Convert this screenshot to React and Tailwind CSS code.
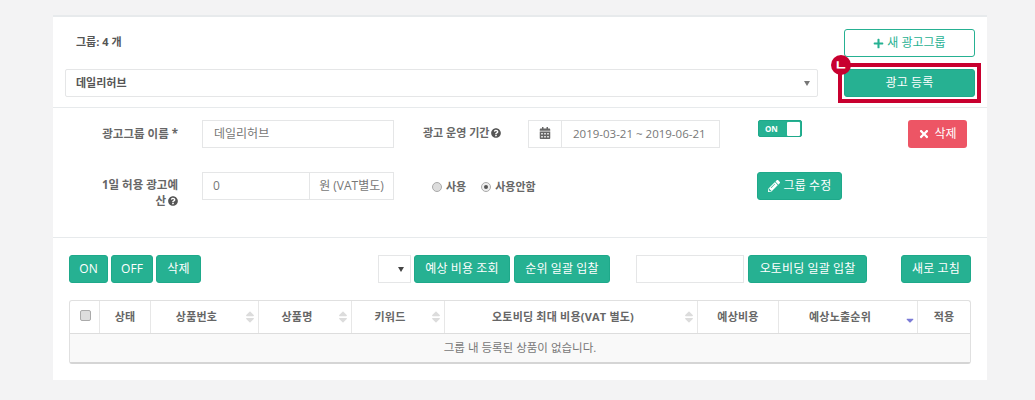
import React from "react";
import { FaPlus, FaTimes, FaPencilAlt, FaCalendarAlt, FaQuestionCircle, FaSort, FaSortDown } from "react-icons/fa";

const GreenBtn = ({ className = "", children }) => (
  <button className={`h-7 flex items-center justify-center gap-1 rounded-[3px] bg-[#26b192] border border-[#1ea98a] text-white text-[12px] tracking-[0.1px] whitespace-nowrap ${className}`}>
    {children}
  </button>
);

const Caret = ({ className = "" }) => (
  <span className={`w-0 h-0 border-x-[3px] border-t-[5px] border-x-transparent ${className}`}></span>
);

const columns = [
  { label: "상태", width: "w-[51px]" },
  { label: "상품번호", width: "w-[108px]", sort: true },
  { label: "상품명", width: "w-[93px]", sort: true },
  { label: "키워드", width: "w-[93px]", sort: true },
  { label: "오토비딩 최대 비용(VAT 별도)", width: "w-[253px]", sort: true },
  { label: "예상비용", width: "w-[81px]" },
  { label: "예상노출순위", width: "w-[139px]", active: true },
  { label: "적용", width: "" },
];

const Help = () => <FaQuestionCircle className="inline-block text-[10px] text-[#555] ml-0.5 align-[-1px]" />;

export default function App() {
  return (
    <div className="min-h-[400px] bg-[#f3f3f4] pt-[15px] text-[#676a6c] text-[12px] font-['Open_Sans','Noto_Sans_CJK_KR',sans-serif]">
      <div className="ml-[53px] w-[934px] h-[365px] bg-white border-t-2 border-[#e7eaec]">
        {/* Group header */}
        <div className="h-[91px] border-b border-[#e7eaec] flex">
          <div className="w-[765px] pl-3 pt-[17px]">
            <div className="pl-[11px] h-[20px] font-bold text-[#555] text-[11px]">그룹: 4 개</div>
            <div className="mt-[15px] w-[753px] h-7 flex items-center justify-between pl-[10px] pr-[7px] border border-[#e5e6e7] rounded-[2px] text-[#555] text-[11px] font-bold">
              <span>데일리허브</span>
              <Caret className="border-t-[#777]" />
            </div>
          </div>
          <div className="pl-[26px] pt-3">
            <button className="w-[131px] h-7 flex items-center justify-center gap-[3px] rounded-[3px] bg-white border border-[#26b192] text-[#26b192] text-[12px]">
              <FaPlus className="text-[11px]" />새 광고그룹
            </button>
            <div className="relative mt-[6px] -ml-[6px] w-[143px] h-[40px] border-[4px] border-[#c8002f] pt-[2px] pl-[2px]">
              <GreenBtn className="w-[131px]">광고 등록</GreenBtn>
              <span className="absolute -left-[11px] -top-[12px] w-5 h-5 rounded-full bg-[#c8002f] text-white flex items-center justify-center text-[14px] font-bold leading-none">ㄴ</span>
            </div>
          </div>
        </div>

        {/* Group form */}
        <div className="h-[130px] border-b border-[#e7eaec] pt-3">
          <div className="flex">
            <div className="w-[125px] pt-[5px] text-right font-bold text-[11.5px] text-[#666]">광고그룹 이름 *</div>
            <div className="ml-6 w-[192px] h-7 border border-[#e5e6e7] flex items-center px-[11px] text-[12px] text-[#777]">데일리허브</div>
            <div className="ml-[29px] w-[85px] pt-[5px] font-bold text-[11px] text-[#666] whitespace-nowrap">광고 운영 기간<Help /></div>
            <div className="ml-5 w-[192px] h-7 border border-[#e5e6e7] flex text-[11.5px] text-[#777]">
              <span className="w-[33px] border-r border-[#e5e6e7] flex items-center justify-center">
                <FaCalendarAlt className="text-[12px] text-[#666] -mt-0.5" />
              </span>
              <span className="flex-1 flex items-center pl-[11px] whitespace-nowrap">2019-03-21 ~ 2019-06-21</span>
            </div>
            <div className="ml-[38px] w-[44px] h-[17px] rounded-[2px] bg-[#26b192] border border-[#1ea98a] flex items-center justify-between pl-[6px] pr-px">
              <span className="text-[8px] font-bold text-white">ON</span>
              <span className="w-[13px] h-[14px] bg-white rounded-[1px]"></span>
            </div>
            <button className="ml-[106px] w-[59px] h-7 rounded-[3px] bg-[#ed5565] text-white text-[12px] flex items-center justify-center gap-1">
              <FaTimes className="text-[12px]" />삭제
            </button>
          </div>
          <div className="flex mt-6">
            <div className="w-[125px] pl-[46px] pt-[5px] text-right font-bold text-[11.5px] leading-[16px] text-[#666] break-all">1일 허용 광고예산<Help /></div>
            <div className="ml-6 w-[192px] h-7 border border-[#e5e6e7] flex text-[12px] text-[#777]">
              <span className="w-[106px] flex items-center px-[10px]">0</span>
              <span className="flex-1 border-l border-[#e5e6e7] flex items-center justify-center whitespace-nowrap">원 (VAT별도)</span>
            </div>
            <div className="ml-[38px] w-[325px] h-7 pt-[2px] flex items-center text-[11px] text-[#666] font-bold">
              <span className="w-[10px] h-[10px] rounded-full bg-[#ddd] border border-[#aaa]"></span>
              <span className="ml-1">사용</span>
              <span className="ml-[15px] w-[10px] h-[10px] rounded-full bg-[#eee] border border-[#aaa] flex items-center justify-center">
                <span className="w-1 h-1 rounded-full bg-[#555]"></span>
              </span>
              <span className="ml-1">사용안함</span>
            </div>
            <GreenBtn className="w-[85px]"><FaPencilAlt className="text-[12px]" />그룹 수정</GreenBtn>
          </div>
        </div>

        {/* Toolbar */}
        <div className="pl-4 pt-[17px] flex">
          <GreenBtn className="w-[39px]">ON</GreenBtn>
          <GreenBtn className="ml-[3px] w-[42px]">OFF</GreenBtn>
          <GreenBtn className="ml-[3px] w-[45px]">삭제</GreenBtn>
          <div className="ml-[177px] w-[33px] h-7 border border-[#e5e6e7] flex items-center justify-end pr-[6px]">
            <Caret className="border-t-[#444]" />
          </div>
          <GreenBtn className="ml-[3px] w-[96px]">예상 비용 조회</GreenBtn>
          <GreenBtn className="ml-[4px] w-[96px]">순위 일괄 입찰</GreenBtn>
          <div className="ml-[26px] w-[108px] h-7 border border-[#e5e6e7]"></div>
          <GreenBtn className="ml-[4px] w-[119px]">오토비딩 일괄 입찰</GreenBtn>
          <GreenBtn className="ml-[34px] w-[70px]">새로 고침</GreenBtn>
        </div>

        {/* Product table */}
        <div className="ml-4 mt-[17px] w-[902px] border border-[#e0e0e0] border-b-2 border-b-[#d5d5d5] rounded-[3px]">
          <div className="h-[33px] flex border-b border-[#ddd] font-bold text-[11px] tracking-[0.2px] text-[#666]">
            <div className="w-[30px] border-r border-[#e7e7e7] pl-[10px] pt-[9px]">
              <div className="w-[11px] h-[11px] rounded-[2px] bg-[#ddd] border border-[#aaa]"></div>
            </div>
            {columns.map((col) => (
              <div key={col.label} className={`relative flex items-center justify-center border-r border-[#e7e7e7] last:border-r-0 ${col.sort || col.active ? "pr-4" : ""} ${col.width || "flex-1"}`}>
                {col.label}
                {col.sort && <FaSort className="absolute right-[1px] top-[9px] text-[14px] text-[#dcdcdc]" />}
                {col.active && <FaSortDown className="absolute right-[1px] top-[11px] text-[12px] text-[#7b7bd6]" />}
              </div>
            ))}
          </div>
          <div className="h-[28px] bg-[#f9f9f9] flex items-center justify-center text-[11.5px] text-[#777]">
            그룹 내 등록된 상품이 없습니다.
          </div>
        </div>
      </div>
    </div>
  );
}
